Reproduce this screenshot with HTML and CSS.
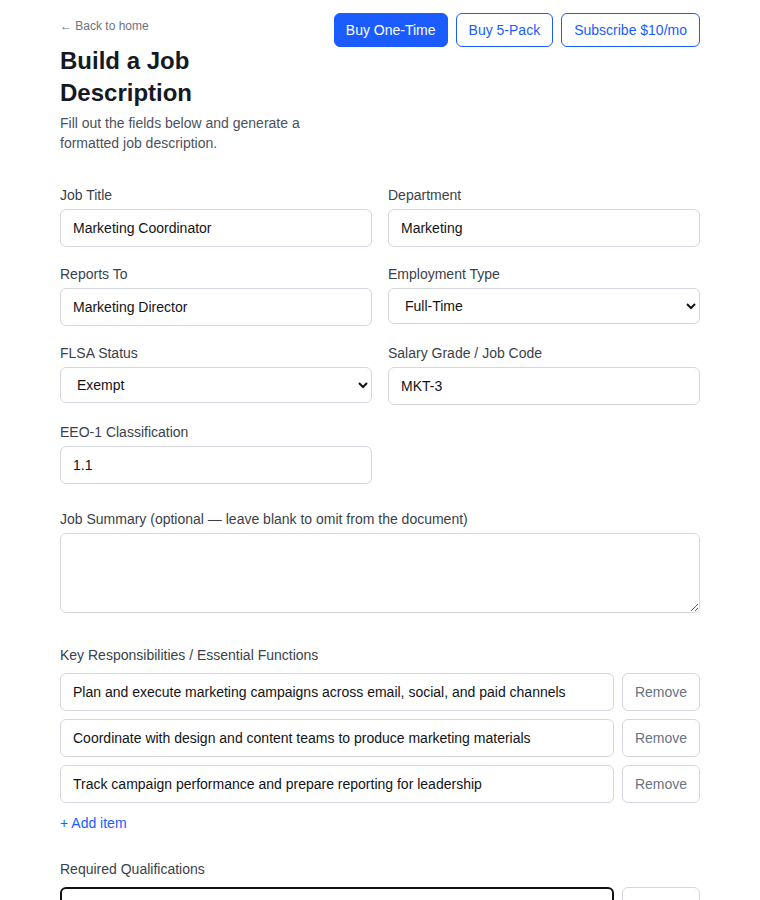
FILE: index.html
```html
<!DOCTYPE html>
<html lang="en">
<head>
<meta charset="utf-8">
<title>Build a Job Description</title>
<link rel="stylesheet" href="styles.css">
</head>
<body>
<div class="page">
  <header class="header">
    <div class="intro">
      <a class="back" href="#">← Back to home</a>
      <h1 class="title">Build a Job Description</h1>
      <p class="lead">Fill out the fields below and generate a formatted job description.</p>
    </div>
    <div class="actions">
      <button class="btn btn-primary" type="button">Buy One-Time</button>
      <button class="btn btn-outline" type="button">Buy 5-Pack</button>
      <button class="btn btn-outline" type="button">Subscribe $10/mo</button>
    </div>
  </header>

  <div class="grid">
    <div class="field">
      <label class="label">Job Title</label>
      <input class="input" type="text" value="Marketing Coordinator">
    </div>
    <div class="field">
      <label class="label">Department</label>
      <input class="input" type="text" value="Marketing">
    </div>
    <div class="field">
      <label class="label">Reports To</label>
      <input class="input" type="text" value="Marketing Director">
    </div>
    <div class="field">
      <label class="label">Employment Type</label>
      <select class="select"><option>Full-Time</option><option>Part-Time</option></select>
    </div>
    <div class="field">
      <label class="label">FLSA Status</label>
      <select class="select"><option>Exempt</option><option>Non-Exempt</option></select>
    </div>
    <div class="field">
      <label class="label">Salary Grade / Job Code</label>
      <input class="input" type="text" value="MKT-3">
    </div>
    <div class="field">
      <label class="label">EEO-1 Classification</label>
      <input class="input" type="text" value="1.1">
    </div>
  </div>

  <section class="section summary">
    <label class="label">Job Summary (optional — leave blank to omit from the document)</label>
    <textarea class="textarea"></textarea>
  </section>

  <section class="section">
    <div class="label list-label">Key Responsibilities / Essential Functions</div>
    <div class="list">
      <div class="item">
        <input class="input" type="text" value="Plan and execute marketing campaigns across email, social, and paid channels">
        <button class="remove" type="button">Remove</button>
      </div>
      <div class="item">
        <input class="input" type="text" value="Coordinate with design and content teams to produce marketing materials">
        <button class="remove" type="button">Remove</button>
      </div>
      <div class="item">
        <input class="input" type="text" value="Track campaign performance and prepare reporting for leadership">
        <button class="remove" type="button">Remove</button>
      </div>
    </div>
    <button class="add" type="button">+ Add item</button>
  </section>

  <section class="section">
    <div class="label list-label">Required Qualifications</div>
    <div class="list">
      <div class="item">
        <input class="input focused" type="text" value="">
        <button class="remove" type="button">Remove</button>
      </div>
    </div>
  </section>
</div>
</body>
</html>
```

FILE: styles.css
```css
* { box-sizing: border-box; }

html, body {
  margin: 0;
  padding: 0;
  background: #ffffff;
}

body {
  font-family: "Liberation Sans", Arial, sans-serif;
  color: #1f2430;
  font-size: 14px;
}

.page {
  max-width: 640px;
  margin: 0 auto;
  padding: 13px 0 40px;
}

.header {
  display: flex;
  justify-content: space-between;
  align-items: flex-start;
  gap: 16px;
  margin-bottom: 32px;
}

.intro {
  flex: 1 1 auto;
  min-width: 0;
}

.back {
  display: block;
  font-size: 12px;
  line-height: 16px;
  padding-top: 5px;
  color: #6b7280;
  text-decoration: none;
}

.title {
  margin: 11px 0 4px;
  font-size: 24px;
  line-height: 32px;
  font-weight: 700;
  color: #151923;
}

.lead {
  margin: 0;
  font-size: 14px;
  line-height: 20px;
  color: #4b5160;
}

.actions {
  display: flex;
  gap: 8px;
  flex-shrink: 0;
}

.btn {
  font-family: inherit;
  font-size: 14px;
  line-height: 16px;
  padding: 8px 12px;
  border-radius: 6px;
  border: 1px solid #1a5cff;
  cursor: pointer;
  white-space: nowrap;
}

.btn-primary {
  background: #1a5cff;
  color: #ffffff;
  padding: 8px 11px;
}

.btn-outline {
  background: #ffffff;
  color: #1a5cff;
}

.grid {
  display: grid;
  grid-template-columns: 1fr 1fr;
  column-gap: 16px;
  row-gap: 17px;
}

.field {
  display: flex;
  flex-direction: column;
}

.label {
  display: block;
  font-size: 14px;
  line-height: 21px;
  margin-bottom: 3px;
  color: #3a3f4b;
}

.input,
.select,
.textarea {
  font-family: inherit;
  font-size: 14px;
  color: #111318;
  background: #ffffff;
  border: 1px solid #d4d7dd;
  border-radius: 6px;
  width: 100%;
}

.input {
  height: 38px;
  padding: 0 12px;
}

.select {
  height: 36px;
  padding: 0 12px;
}

.textarea {
  display: block;
  height: 80px;
  padding: 10px 12px;
  resize: vertical;
}

.section {
  margin-top: 25px;
}

.summary {
  margin-bottom: 32px;
}

.summary + .section {
  margin-top: 0;
}

.list-label {
  line-height: 20px;
  margin-bottom: 8px;
}

.list {
  display: flex;
  flex-direction: column;
  gap: 8px;
}

.item {
  display: flex;
  gap: 8px;
}

.item .input {
  flex: 1 1 auto;
  width: auto;
  min-width: 0;
}

.remove {
  flex: 0 0 78px;
  height: 38px;
  font-family: inherit;
  font-size: 14px;
  color: #6b7280;
  background: #ffffff;
  border: 1px solid #d4d7dd;
  border-radius: 6px;
  cursor: pointer;
}

.add {
  display: block;
  margin-top: 10px;
  padding: 0;
  font-family: inherit;
  font-size: 14px;
  line-height: 20px;
  color: #1a5cff;
  background: none;
  border: none;
  cursor: pointer;
}

.section + .section {
  margin-top: 26px;
}

.focused {
  border: 2px solid #111111;
  outline: none;
}
```
